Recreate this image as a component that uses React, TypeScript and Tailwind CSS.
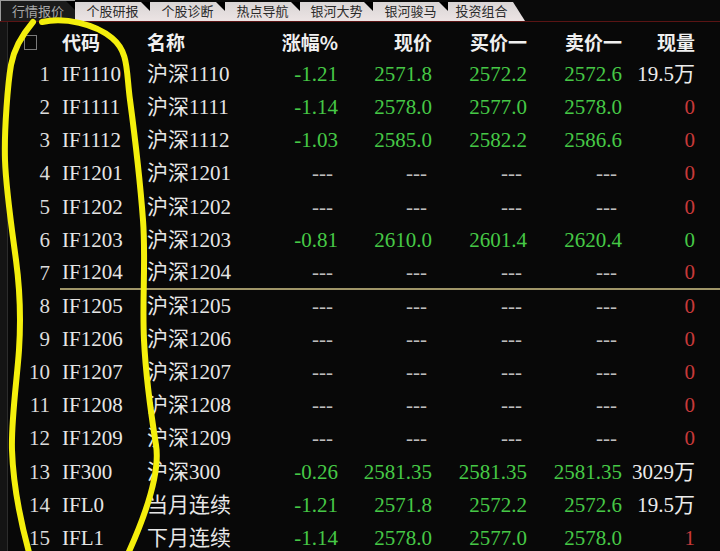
import React from "react";

type Cell = { v: string; c: "g" | "w" | "r" | "d" };

interface Row {
  code: string;
  name: string;
  cells: Cell[];
}

const G = (v: string): Cell => ({ v, c: "g" });
const W = (v: string): Cell => ({ v, c: "w" });
const R = (v: string): Cell => ({ v, c: "r" });
const D: Cell = { v: "---", c: "d" };

const empty = (code: string, name: string): Row => ({
  code,
  name,
  cells: [D, D, D, D, R("0")],
});

const rows: Row[] = [
  { code: "IF1110", name: "沪深1110", cells: [G("-1.21"), G("2571.8"), G("2572.2"), G("2572.6"), W("19.5万")] },
  { code: "IF1111", name: "沪深1111", cells: [G("-1.14"), G("2578.0"), G("2577.0"), G("2578.0"), R("0")] },
  { code: "IF1112", name: "沪深1112", cells: [G("-1.03"), G("2585.0"), G("2582.2"), G("2586.6"), R("0")] },
  empty("IF1201", "沪深1201"),
  empty("IF1202", "沪深1202"),
  { code: "IF1203", name: "沪深1203", cells: [G("-0.81"), G("2610.0"), G("2601.4"), G("2620.4"), G("0")] },
  empty("IF1204", "沪深1204"),
  empty("IF1205", "沪深1205"),
  empty("IF1206", "沪深1206"),
  empty("IF1207", "沪深1207"),
  empty("IF1208", "沪深1208"),
  empty("IF1209", "沪深1209"),
  { code: "IF300", name: "沪深300", cells: [G("-0.26"), G("2581.35"), G("2581.35"), G("2581.35"), W("3029万")] },
  { code: "IFL0", name: "当月连续", cells: [G("-1.21"), G("2571.8"), G("2572.2"), G("2572.6"), W("19.5万")] },
  { code: "IFL1", name: "下月连续", cells: [G("-1.14"), G("2578.0"), G("2577.0"), G("2578.0"), R("1")] },
];

const tabs = ["行情报价", "个股研报", "个股诊断", "热点导航", "银河大势", "银河骏马", "投资组合"];

const colorOf: Record<Cell["c"], string> = {
  g: "text-[#46c846]",
  w: "text-[#ececec]",
  r: "text-[#c83a3a]",
  d: "text-[#bdbdbd] pr-[5px]",
};

// column grid starts at x=60 (after the 50px index cell + 10px gap)
const grid = "grid flex-1 grid-cols-[87px_103px_88px_94px_95px_95px_73px_1fr]";

function Tabs() {
  return (
    <div className="flex h-[22px] border-b border-[#5a1414] bg-[#0a0a0a] text-[13px] leading-none">
      {tabs.map((t, i) => {
        const first = i === 0;
        const last = i === tabs.length - 1;
        return (
          <div
            key={t}
            className={
              "relative flex items-center justify-center " +
              (i === 4 ? "w-[73px] " : "w-[75px] ") +
              (first
                ? "border-l border-t border-[#9a9a9a] bg-[#1b1b1b] text-[#a8a8a8]"
                : "mt-[2px] bg-gradient-to-b from-[#d9d5d5] to-[#ece4e4] text-[#2a2a2a]") +
              (last ? " w-[77px] pr-[10px] [clip-path:polygon(0_0,calc(100%-12px)_0,100%_100%,0_100%)]" : "")
            }
          >
            {t}
            {!last && (
              <span className="absolute right-0 top-0 h-0 w-0 border-l-[9px] border-t-[9px] border-l-transparent border-t-black" />
            )}
          </div>
        );
      })}
    </div>
  );
}

export default function App() {
  return (
    <div
      className="relative h-[551px] w-[720px] overflow-hidden bg-[#080808]"
      style={{ fontFamily: '"Liberation Serif", "Noto Sans CJK SC", serif' }}
    >
      <Tabs />
      <div className="flex">
        <div className="h-[529px] w-[8px] border-r border-[#2c2c2c] bg-[#141414]" />
        <div className="flex-1">
          {/* header */}
          <div className="flex h-[36px] items-center pt-[5px] text-[19px] font-bold text-[#f0f0f0]">
            <div className="flex w-[42px] justify-center pl-[2px]">
              <span className="h-[15px] w-[13px] border border-[#7a7a7a]" />
            </div>
            <div className={"ml-[10px] " + grid} style={{ fontFamily: '"Noto Sans CJK SC", sans-serif' }}>
              <span className="pl-[2px]">代码</span>
              <span>名称</span>
              <span className="text-right">涨幅%</span>
              <span className="text-right">现价</span>
              <span className="text-right">买价一</span>
              <span className="text-right">卖价一</span>
              <span className="text-right">现量</span>
            </div>
          </div>
          {/* body */}
          {rows.map((r, i) => (
            <div key={r.code} className="flex h-[33.14px] text-[21px] leading-none">
              <div className="flex w-[42px] items-center justify-end text-[#dcdcdc]">{i + 1}</div>
              <div
                className={
                  "ml-[10px] items-center " +
                  grid +
                  (i === 6 ? " border-b-2 border-[#a09668]" : "")
                }
              >
                <span className="pl-[2px] text-[#e6e6e6]">{r.code}</span>
                <span className="text-[#e6e6e6]">{r.name}</span>
                {r.cells.map((c, j) => (
                  <span key={j} className={"text-right " + colorOf[c.c]}>
                    {c.v}
                  </span>
                ))}
              </div>
            </div>
          ))}
        </div>
      </div>

      {/* hand-drawn yellow marker annotation over the code column */}
      <svg
        className="pointer-events-none absolute left-0 top-0"
        width="720"
        height="551"
        viewBox="0 0 720 551"
        fill="none"
      >
        <path
          d="M33 22 C 22 35, 14 48, 11 65 S 4 130, 5 160 S 12 230, 16 260 S 21 320, 19 350 S 11 420, 12 450 S 20 520, 30 556"
          stroke="#f4ef0c"
          strokeWidth="6"
          strokeLinecap="round"
        />
        <path
          d="M42 22 C 65 17, 95 24, 112 38 S 126 70, 130 100 S 140 180, 143 220 S 142 300, 144 340 S 152 420, 156 445 S 148 510, 127 556"
          stroke="#f4ef0c"
          strokeWidth="6"
          strokeLinecap="round"
        />
      </svg>
    </div>
  );
}
